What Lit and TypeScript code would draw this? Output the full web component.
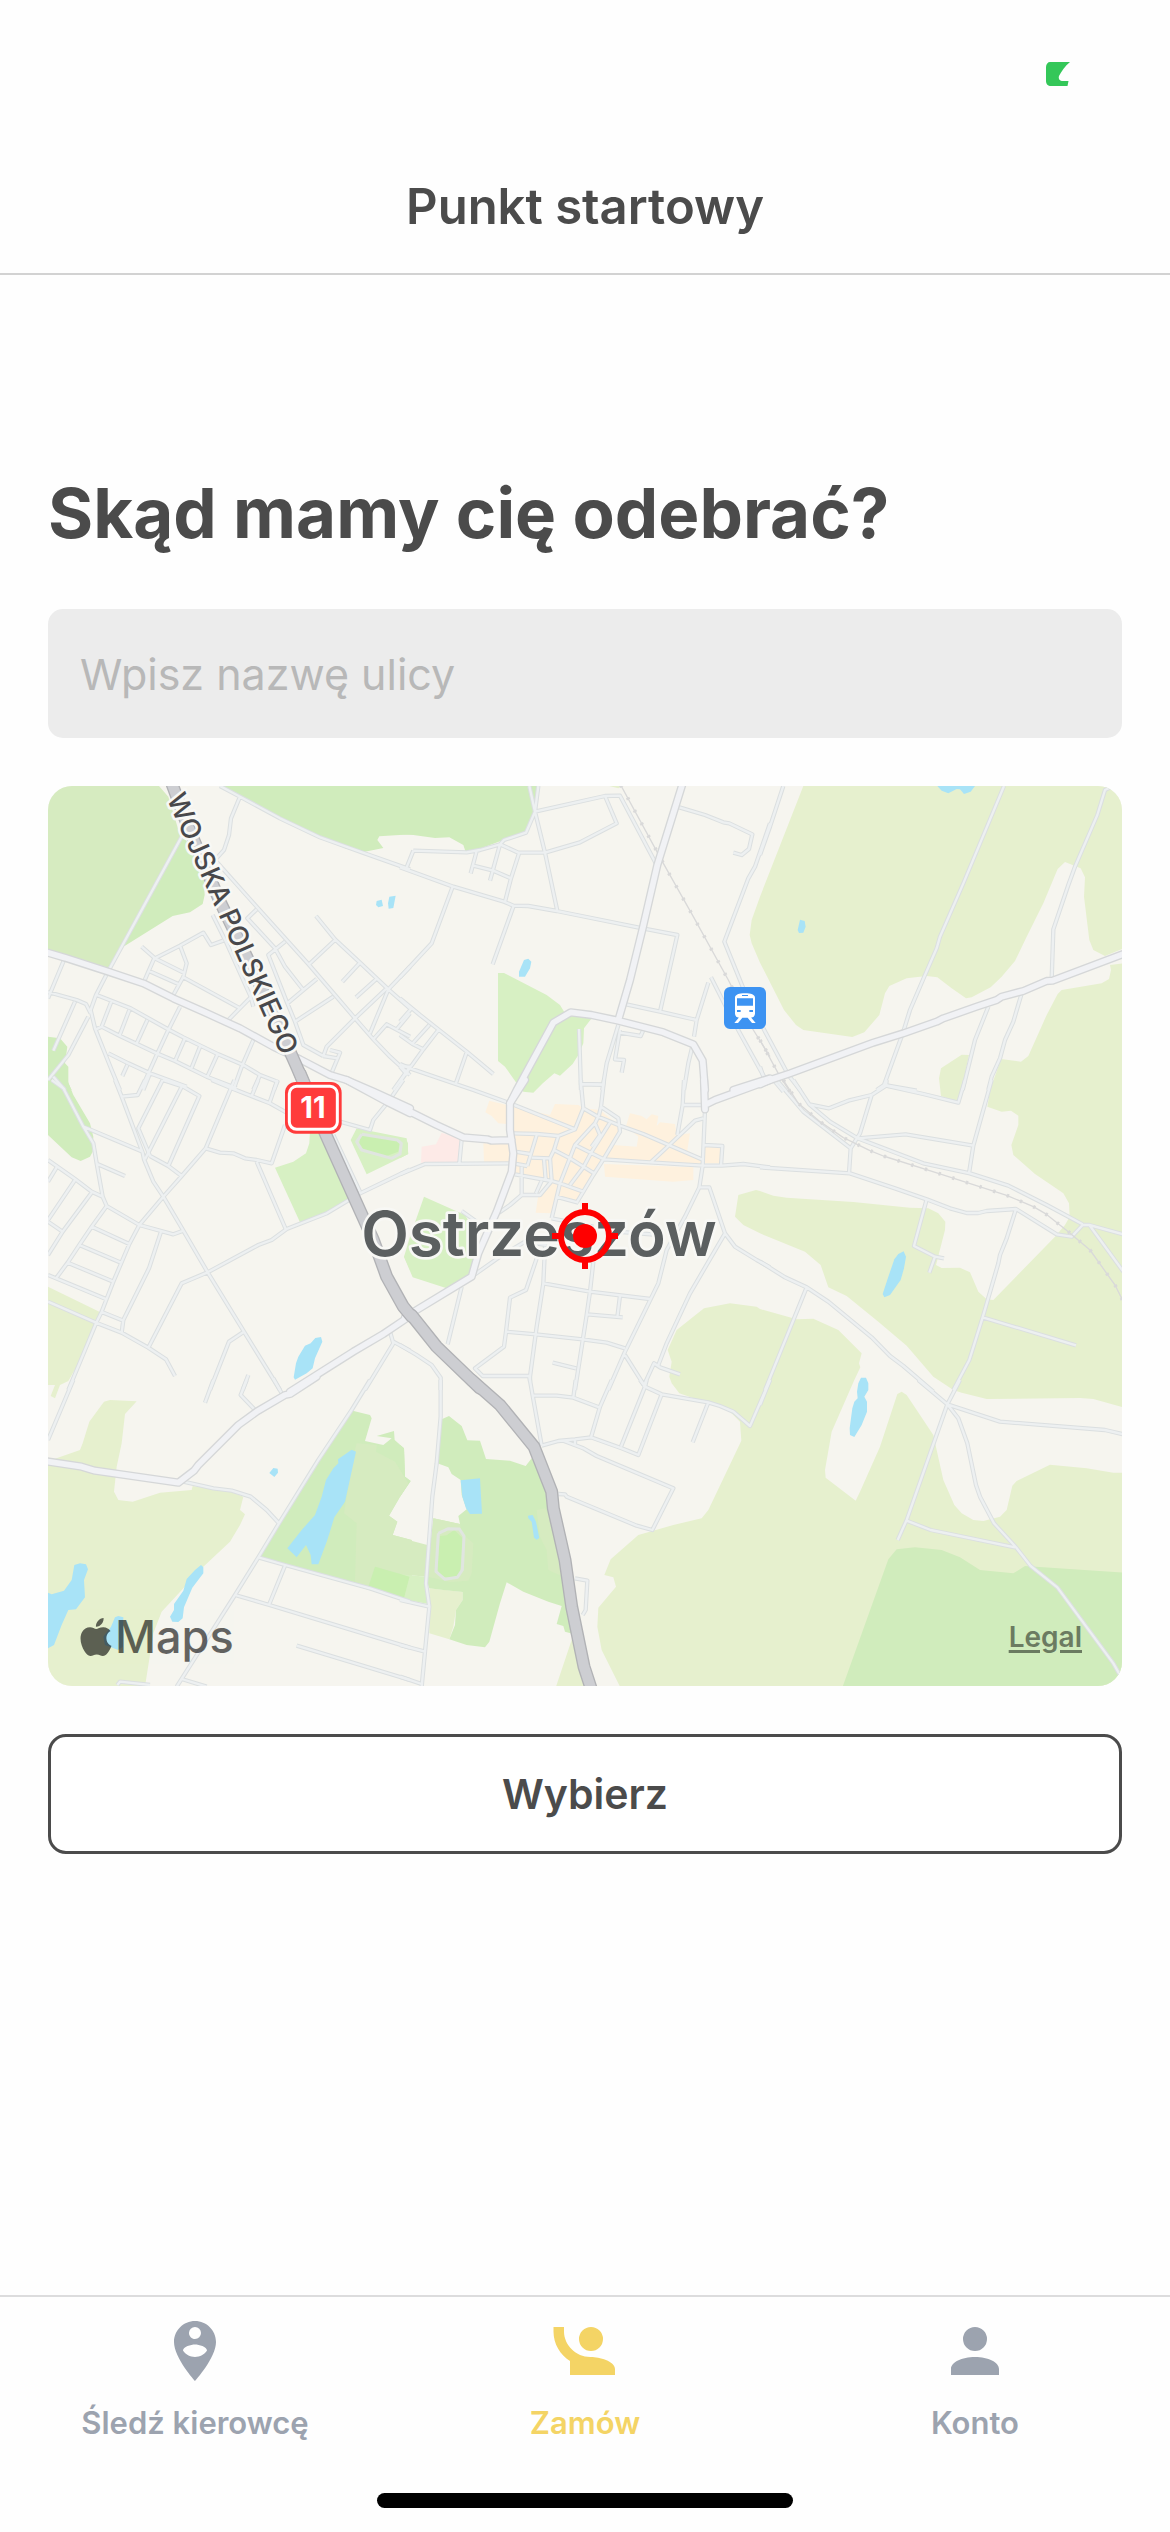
import { LitElement, html, svg, css } from "lit";
import { customElement, property, state } from "lit/decorators.js";

type Layer =
  | "meadow" | "wood" | "grove" | "park" | "pitch" | "town" | "clinic" | "water"
  | "track" | "street" | "avenue" | "highway" | "rail";

interface Sector {
  x: number;
  y: number;
  shapes: Partial<Record<Layer, string[]>>;
}

/* The map is kept as a grid of sectors; each lists its shapes as point runs in its own coordinates. */
const SECTORS: Sector[] = [
  {
    x: -24, y: -18,
    shapes: {
      grove: ["24,18 357,18 385,50 420,165 425,175 245,500 202,562 24,512"],
      wood: [
        "24,187 190,240 240,258 268,300 264,400 240,450 230,520 205,562 24,512",
        "425,170 460,200 490,270 494,345 488,372 450,397 398,408 255,497 245,500",
        "540,18 600,50 750,130 915,205 960,218 1030,204 1012,180 1018,169 1115,163 1115,18",
        "24,770 60,775 82,800 75,850 85,860 85,910 95,930 24,930",
      ],
      water: ["1010,363 1025,359 1029,378 1015,382 1008,375", "1048,350 1067,347 1060,384 1046,386 1044,370"],
      street: [
        "425,170 245,500 204,575 168,645 152,690", "152,690 165,745 215,870 240,930",
        "24,636 110,660 138,672 152,700", "72,540 24,655", "105,665 40,812", "145,710 85,825 24,900",
        "40,890 75,930", "170,645 272,685 388,750 430,772 535,823 610,855 660,885 712,905 702,930",
        "215,662 185,740 168,748", "185,740 240,768 350,820 405,843 500,890 590,925", "268,690 238,768",
        "322,720 290,790", "420,680 385,750 350,825 305,925", "435,775 405,843", "480,800 453,868",
        "533,822 502,890", "640,780 605,860 580,930", "660,885 640,930", "205,820 265,850 330,880 440,920",
        "262,855 247,888", "330,880 310,930", "305,500 345,535 435,580",
        "345,535 420,497 490,458 513,495 550,482", "345,530 325,575 310,610",
        "420,497 440,550 430,590 400,645", "325,572 415,612", "430,592 600,685", "563,722 632,652",
        "518,405 560,490 632,650 640,680",
        "600,50 573,115 567,165 552,210 525,240 583,305 650,380 740,480 805,552 885,645 945,715 1000,778 1050,830 1110,885",
        "540,18 600,50 720,115 840,172 960,215 1110,268", "650,388 622,415 705,505 735,560 790,630",
        "735,485 685,525 740,665 765,725 790,795 850,828", "740,672 790,630 830,597", "765,725 880,650",
        "828,408 885,478 960,548 1045,628 1110,685", "885,480 805,555", "960,548 907,605", "1008,598 948,652",
        "1040,625 945,715 860,800 850,828", "1045,628 990,760", "1045,628 1110,560", "1000,778 1040,733 1110,770",
        "1070,748 1110,700", "850,828 893,835 900,818 870,810", "893,835 870,890", "1085,860 1110,860 1060,930",
      ],
      avenue: ["20,517 75,533 205,575 310,610 400,655 490,695 600,745 700,800 780,838 870,885 920,900 1000,935 1110,985"],
      highway: ["388,-10 440,130 540,365 620,530 690,680 770,860 800,930"],
    },
  },
  {
    x: 1056, y: -18,
    shapes: {
      wood: ["0,18 412,18 402,90 378,158 310,180 230,210 196,213 190,195 148,172 105,174 40,165 0,163"],
      meadow: ["628,18 668,18 655,25"],
      park: ["294,579 312,579 440,645 480,675 495,700 575,715 552,745 550,790 535,825 518,852 480,887 463,880 405,930 438,900 400,938 370,935 350,910 315,860 294,843"],
      water: ["372,540 385,536 394,545 390,565 375,590 357,590 357,575"],
      street: [
        "0,262 160,320 312,365 340,377 385,378 470,393 728,445 832,465 780,695", "40,212 20,262",
        "40,212 200,217 240,210 300,193 355,218 435,218 540,187 650,130 615,48",
        "300,193 312,180 378,158 405,95 415,18", "388,18 405,95 435,218 472,393",
        "405,95 615,48 660,47 770,255", "300,193 270,302", "230,213 212,280", "220,257 280,272 333,295",
        "357,220 333,295 315,365", "158,320 95,490 0,592", "340,380 278,553",
        "0,655 60,705 115,748 200,815 280,882", "35,685 0,725", "88,735 38,790", "115,750 70,808 0,905",
        "0,765 38,792 70,808", "200,817 167,912", "0,852 30,865 167,912 220,930 330,970", "0,860 22,885",
        "838,82 915,105 970,127 988,130 1057,163 1047,207 1025,225 1000,218",
        "1110,130 1065,260 1045,295 973,485 1030,625", "665,670 780,695 890,720", "925,608 890,720 882,770",
        "933,592 975,675 1020,760 1095,895", "655,735 620,850 607,930", "660,750 645,838 672,840 665,878",
        "660,758 722,768 730,750", "537,747 543,930", "545,912 607,914", "878,795 865,850 852,930",
      ],
      avenue: [
        "848,10 772,255 728,445 690,600 655,720",
        "330,970 350,930 460,728 512,697 575,705 655,722 790,757 880,793 908,842 915,930",
        "1000,930 1110,895",
      ],
      rail: ["662,15 790,250 880,410 985,600 1060,750 1110,830"],
    },
  },
  {
    x: 2136, y: -18,
    shapes: {
      meadow: ["135,10 130,18 0,350 -25,420 -31,465 -25,490 0,548 72,690 108,735 130,750 277,771 313,757 358,705 375,640 388,618 440,595 500,588 532,592 575,625 618,655 635,652 692,622 725,590 765,543 800,470 850,370 893,267 915,246 962,265 975,292 972,350 988,480 1000,510 1035,528 1090,505 1090,10"],
      water: [
        "532,18 545,32 565,40 590,27 600,28 612,42 632,35 645,18",
        "120,419 134,423 137,440 130,458 117,459 113,450",
      ],
      street: [
        "70,18 30,140 0,225", "732,18 610,310 540,470 530,505 495,585 450,690 430,755 372,915",
        "1055,20 1035,30 1012,105 945,260 925,315 880,448 875,598",
        "785,640 760,725 735,780 720,835 695,890 685,930", "685,680 645,780 608,930", "372,915 470,932",
        "372,915 350,930", "10,745 85,885 120,930", "0,860 12,895", "45,905 70,935",
      ],
      avenue: ["0,913 30,900 90,880 340,788 430,760 530,725 550,715 650,680 710,660 725,650 790,633 860,603 878,602 1095,520"],
      rail: ["0,780 60,890 90,935"],
    },
  },
  {
    x: -24, y: 882,
    shapes: {
      wood: ["24,0 82,0 100,45 150,130 160,170 158,215 150,230 122,243 95,232 24,165"],
      meadow: ["24,620 178,695 172,735 135,815 85,903 60,915 45,955 32,948 45,915 24,915"],
      park: [
        "810,150 865,160 925,355 860,398 780,427 705,263 760,245 798,220 808,190",
        "950,145 1100,175 1105,222 980,283 932,180", "1110,505 1092,530 1110,570",
      ],
      pitch: ["962,165 1000,167 1080,185 1075,215 1040,228 975,215 958,190"],
      track: ["965,163 1072,180 1084,190 1080,222 1055,235 965,210 950,185 965,163"],
      water: ["826,774 843,771 847,785 825,835 818,865 800,880 765,899 761,892 768,850 775,830 795,797 812,790"],
      street: [
        "35,0 70,25 130,140 160,190 170,250 188,350 200,378 298,435 400,463 430,452", "130,140 308,215",
        "172,252 255,288", "24,240 105,297 155,335 188,350", "50,262 24,305", "105,300 24,420",
        "155,338 68,455 24,425", "68,455 24,525", "200,378 155,440 118,495 83,548 48,595", "155,440 268,492",
        "118,495 243,548", "83,548 220,605", "24,585 200,658",
        "370,350 298,435 268,492 220,605 185,695 168,730 135,810 85,930",
        "24,665 168,728 245,758 325,803 378,838 405,888", "183,695 250,722", "363,455 327,565 250,720 245,758",
        "225,0 245,50 308,218 312,238 340,305 370,350 430,452 503,577 612,755 720,930", "245,50 293,45 315,0",
        "368,0 295,145 330,228", "368,0 430,20 478,48 385,258", "425,20 315,238", "330,228 385,258 425,288",
        "583,0 497,205 425,288 370,350", "497,205 540,218 580,220 615,235 650,240 695,250 735,135",
        "650,245 737,447", "515,0 575,25 690,70 740,98", "655,0 635,48", "712,0 688,70",
        "503,577 655,495 695,480 740,447 860,400 960,340 1110,268", "503,577 425,610 325,803",
        "612,755 567,785 510,930", "625,885 608,930", "880,165 960,335", "900,125 990,150 1000,120 1045,65 1090,0",
        "1050,755 1060,790 975,930", "1060,785 1110,812",
      ],
      avenue: ["920,0 1040,65 1110,100", "750,935 940,815 1030,762 1095,718"],
      highway: ["780,-20 857,163 960,392 1000,480 1040,590 1090,680 1115,710"],
    },
  },
  {
    x: 1056, y: 882,
    shapes: {
      park: ["72,350 195,405 235,470 215,590 140,625 38,592 12,530 30,470", "0,175 18,178 24,190 24,222 0,235"],
      town: [
        "268,62 320,75 320,132 295,130 275,108 256,97",
        "338,80 450,105 465,72 535,75 550,85 600,90 655,135 660,160 620,230 575,290 530,370 468,350 455,400 407,398 415,345 450,305 345,283 340,160",
        "678,138 690,100 725,108 740,118 755,103 775,108 770,138 780,127 825,132 830,165 870,160 862,210 905,240 905,252 750,247 615,235 640,195 710,200 715,170",
        "612,252 880,262 880,300 820,305 615,290", "915,195 962,200 960,250 915,250", "250,190 335,192 335,248 252,246",
      ],
      clinic: ["125,158 185,178 178,247 63,248 65,200 108,193"],
      street: [
        "330,70 525,148 550,85 543,12 543,0", "543,12 607,14", "612,0 603,80 597,105 585,130 525,195 480,310 455,415",
        "550,85 590,108 655,135 730,162 910,240", "603,80 655,115 660,155 612,235 580,285 550,335 530,368",
        "630,128 575,215 550,262 510,315", "585,130 600,165 575,200", "340,160 410,162 475,168 525,148",
        "475,168 462,210 510,235 582,280", "525,195 612,238", "462,210 450,235 395,233", "410,165 382,258",
        "345,215 390,222", "455,303 450,235", "432,237 437,298", "345,283 455,303 480,310 550,335",
        "340,250 382,258", "365,260 365,345 420,345 455,303", "425,302 408,340", "365,345 330,375 297,398",
        "468,350 535,368", "0,283 75,252 345,250", "185,178 178,250",
        "612,238 750,247 910,257 965,257 1030,252 1110,262", "752,247 805,198 885,122 910,115",
        "852,0 848,75 832,165", "848,75 905,75",
        "915,90 908,257 898,322 855,410 800,510 775,610 675,815 625,930",
        "898,322 928,322 975,460 1005,500 1070,540 1110,562", "912,195 967,198 963,257",
        "975,460 870,640 800,790 775,855", "840,883 780,862 762,850 730,920", "675,825 735,920",
        "455,415 580,440", "650,455 780,465", "580,545 570,635 560,705 525,930",
        "435,500 430,610 410,740 390,890 390,905", "430,610 570,635 750,657", "660,647 652,712", "562,703 668,712",
        "410,535 378,630 330,653 318,755 312,800 225,865 248,888 390,888",
        "318,755 408,763 548,778 620,788 675,805", "458,848 528,865", "222,585 300,530 375,485 440,495",
        "185,393 230,425", "185,620 143,793", "0,795 50,825 95,855 122,893 122,930",
      ],
      avenue: [
        "0,80 110,135 190,172 262,178 275,182 335,180",
        "375,0 330,70 330,150 340,220 335,275 290,395 235,520 215,590 50,690 15,712",
        "912,0 915,88", "915,75 945,60 1110,0",
      ],
      highway: ["35,706 110,800 240,925"],
    },
  },
  {
    x: 2136, y: 882,
    shapes: {
      meadow: [
        "1090,-350 1050,-345 1053,-330 1047,-303 1025,-290 905,-270 893,-258 860,-195 805,-72 783,-55 723,-63 690,30 682,80 725,95 753,92 775,107 775,135 754,195 760,225 825,282 910,340 927,370 929,410 915,435 885,470 700,660 680,658 655,635 630,577 600,563 545,564 528,555 555,450 556,425 535,400 505,385 450,383 280,366 80,353 40,347 0,333 -12,330 -65,345 -75,410 -50,435 0,460 135,515 182,555 205,622 260,648 355,725 440,797 520,890 580,930 605,938 680,957 960,954 1000,957 1090,982",
        "627,-75 605,-76 543,-35 537,-5 543,48 597,68",
      ],
      water: ["431,514 438,530 432,565 422,600 390,645 373,652 368,642 385,590 403,538 415,522"],
      street: [
        "0,262 270,280 405,325 500,358 570,385 620,399 655,399 680,393 768,387 890,463 935,470 968,435 988,435 1090,463",
        "988,435 1090,575", "100,0 148,73 210,125 293,175 490,250 630,280 745,317 860,375 968,433",
        "50,0 130,95 272,205 267,280", "148,73 207,85 265,62 335,45 378,17 380,0", "378,17 490,42 595,68 615,0",
        "335,45 300,160 272,205", "293,175 437,163 640,197", "695,0 640,197 627,280",
        "500,358 462,498 525,530 552,535", "525,530 508,578",
        "768,387 740,475 720,525 715,550 668,712 628,840 580,930", "668,712 948,796",
        "0,545 75,592 140,622 205,665 335,772 390,828 430,858 520,935", "140,622 15,930",
      ],
      rail: ["70,0 115,70 180,125 250,173 330,212 370,228 535,280 740,346 820,380 855,400 925,455 990,510 1040,580 1065,615 1090,665"],
    },
  },
  {
    x: -24, y: 1782,
    shapes: {
      meadow: ["45,236 120,210 128,190 148,125 192,65 210,60 290,64 255,102 245,190 230,260 222,335 235,360 278,365 360,338 455,330 458,318 575,335 610,350 600,390 615,403 600,435 570,485 490,560 365,695 340,760 315,920 24,920 24,255"],
      wood: ["938,92 990,105 995,115 975,183 1030,195 1055,175 1010,168 1062,153 1064,180 1092,205 1095,290 1112,303 1080,350 1047,407 1072,425 1058,465 1115,480 1115,668 655,530 835,240"],
      grove: ["950,190 1010,195 1008,215 1065,245 1105,310 1080,350 1047,407 1072,425 1058,465 1115,480 1115,590 1005,560 985,620 945,605 950,430 912,400 935,250"],
      pitch: ["1005,560 1108,590 1088,652 985,622"],
      water: [
        "935,209 948,215 915,365 883,412 862,480 835,553 815,553 812,525 798,495 770,532 742,505 785,450 825,405 845,350 858,300 880,265 895,250 894,238",
        "700,264 713,266 714,278 703,291 688,279",
        "103,555 120,550 138,553 144,568 132,600 135,652 108,688 85,690 65,735 42,795 24,805 24,638 35,643 72,632 95,600",
        "483,555 490,562 490,580 457,623 432,682 428,715 415,726 397,725 390,710 402,690 402,672 430,632 440,597 465,570",
        "235,708 250,712 248,800 235,810 195,795 190,770 213,740 225,712",
      ],
      street: [
        "100,0 24,180", "520,0 495,68", "620,0 602,45 650,95", "700,-5 728,45",
        "430,305 520,325 575,332 632,350 680,390 717,430", "990,0 935,90 835,240 717,430 655,532 585,645 410,920",
        "655,532 735,555 990,625 1110,665", "735,557 688,672", "585,645 688,675 1110,803", "770,797 1110,900",
        "425,897 500,920", "232,915 240,905 330,915",
      ],
      avenue: ["20,244 125,260 165,272 415,308 462,272 475,255 595,135 650,95 735,45 750,42 830,-10"],
    },
  },
  {
    x: 1056, y: 1782,
    shapes: {
      wood: [
        "125,118 147,108 185,138 202,181 240,182 258,237 330,242 377,258 395,235 455,330 500,560 520,762 495,755 490,738 470,732 485,678 445,665 370,635 320,607 300,670 268,785 255,802 200,795 148,778 165,735 168,690 188,660 188,636 130,630 88,625 78,600 90,500 100,415 180,432 175,408 200,388 185,345 182,300 155,282 145,262 112,250",
        "0,195 12,205 15,290 32,303 0,350",
      ],
      grove: [
        "435,385 410,390 420,470 440,510 445,570 490,590 470,450", "0,473 82,495 78,590 0,583",
        "100,415 180,432 185,460 220,490 215,580 205,602 150,606 85,590",
      ],
      park: ["0,583 78,590 85,672 0,656"],
      meadow: ["88,625 188,636 188,660 168,690 160,740 148,778 88,760", "520,765 468,920 575,920 545,800"],
      pitch: ["120,468 140,466 163,450 188,475 182,560 175,595 125,590 112,570", "0,583 28,592 12,655 0,650"],
      track: ["115,460 145,446 178,447 192,468 187,570 172,592 135,598 108,575 115,460"],
      water: ["182,301 240,295 246,401 210,402 198,385 187,350", "384,407 398,405 408,425 418,474 410,479 402,473 395,425 385,415"],
      street: [
        "1110,0 1050,138 1000,95 960,78 925,67 785,43 735,20 720,0", "925,67 878,187",
        "785,43 715,225 665,205 573,172 525,178 475,183 425,197", "735,20 663,200", "740,0 735,20",
        "635,0 600,80 573,172", "398,47 470,47 520,53 600,83", "520,53 527,0", "388,-10 398,47 425,197",
        "490,182 550,205 590,228 820,325 757,450 710,437 500,350 495,343 475,342", "525,178 525,192",
        "122,0 122,110 110,250 97,350 78,610 88,680 75,815 65,920", "0,660 45,670 88,680", "0,795 75,815",
        "0,890 65,912", "525,595 562,602 557,690 548,705",
      ],
      highway: ["215,0 300,75 402,200 455,335 460,385 495,540 515,680 552,860 578,940"],
    },
  },
  {
    x: 2136, y: 1782,
    shapes: {
      meadow: ["-250,-150 -168,-215 -90,-230 -10,-220 0,-213 110,-182 160,-184 235,-150 305,-80 297,-50 301,-38 283,0 215,155 195,270 197,293 287,362 300,335 360,200 412,42 425,35 440,45 520,165 550,300 583,375 605,400 640,420 670,423 720,410 740,390 757,317 770,303 870,254 980,265 1060,278 1090,278 1090,920 -420,920 -475,810 -488,740 -485,683 -432,620 -440,592 -467,585 -448,538 -365,465 -260,435 -175,415 -155,390 -56,182 -60,125 -95,90 -160,68 -242,40 -265,10 -272,-10 -265,-55 -277,-90"],
      wood: ["248,920 385,538 410,508 465,502 545,510 600,532 660,570 760,580 795,558 850,562 1090,578 1090,920"],
      water: ["303,-7 318,-7 325,10 325,30 313,50 321,65 321,95 305,135 283,171 270,165 269,145 277,85 283,65 293,55 291,35 295,10"],
      street: [
        "475,0 562,73 440,420 413,480",
        "600,0 562,73 595,115 622,190 648,315 660,350 702,430 768,502 812,558 892,622 1060,850 1080,885",
        "562,73 720,125 1035,150 1090,163", "440,422 512,450 765,502", "30,0 0,75",
      ],
    },
  },
];

const AREAS: Layer[] = ["meadow", "wood", "grove", "park", "pitch", "town", "clinic", "water"];

function layer(kind: Layer, className: string, closed = false) {
  return svg`<g class=${className}>${SECTORS.filter((s) => s.shapes[kind]).map(
    (s) => svg`<path transform=${`translate(${s.x} ${s.y})`}
      d=${s.shapes[kind]!.map((run) => `M${run}${closed ? "z" : ""}`).join("")}></path>`
  )}</g>`;
}

@customElement("town-map")
class TownMap extends LitElement {
  static styles = css`
    :host {
      display: block;
      position: relative;
      overflow: hidden;
      border-radius: 24px;
      aspect-ratio: 179 / 150;
      background: #f6f5ef;
    }
    .canvas { display: block; width: 100%; height: 100%; }
    .meadow { fill: #e6f0ce; }
    .wood { fill: #d0ecbc; }
    .grove { fill: #d6ebc0; }
    .park { fill: #d7f0c3; }
    .pitch { fill: #c9efb0; }
    .town { fill: #fef1de; }
    .clinic { fill: #fdeae7; }
    .water { fill: #a8e3f7; }
    .line { fill: none; stroke-linejoin: round; }
    .track { stroke: #e0e5e0; stroke-width: 9; }
    .street-edge { stroke: #dbdfe0; stroke-width: 13; }
    .street { stroke: #edf0f1; stroke-width: 7; }
    .avenue-edge { stroke: #d5d7d8; stroke-width: 25; stroke-linecap: round; }
    .avenue { stroke: #f1f2f5; stroke-width: 17; stroke-linecap: round; }
    .highway-edge { stroke: #b1b2b5; stroke-width: 39; stroke-linecap: round; }
    .highway { stroke: #cdced2; stroke-width: 31; stroke-linecap: round; }
    .rail { stroke: #d9d9d9; stroke-width: 4; }
    .rail-ties { stroke: #d9d9d9; stroke-width: 11; stroke-dasharray: 7 36; }
    .label {
      font-family: Inter, "Liberation Sans", sans-serif;
      text-anchor: middle;
      paint-order: stroke;
      stroke: #f8f8f5;
      stroke-linejoin: round;
    }
    .road-name { font-size: 82px; font-weight: 500; fill: #48484b; stroke-width: 16; }
    .city { font-size: 186px; font-weight: 600; fill: #5b5f60; stroke-width: 16; }
    .shield { font-size: 88px; font-weight: 700; fill: #fff; stroke: none; }
    .footer {
      position: absolute;
      inset: auto 40px 24px 32px;
      display: flex;
      justify-content: space-between;
      align-items: center;
      font-family: Inter, "Liberation Sans", sans-serif;
    }
    .brand {
      display: flex;
      align-items: center;
      gap: 3px;
      font-size: 45px;
      line-height: 50px;
      font-weight: 500;
      color: #000;
      opacity: 0.6;
    }
    .apple { width: 32px; height: 38px; fill: currentColor; }
    .legal {
      font-size: 28px;
      line-height: 32px;
      font-weight: 600;
      color: #6b7b61;
      text-decoration-thickness: 3px;
      text-underline-offset: 3px;
    }
    .target {
      position: absolute;
      inset: 0;
      margin: auto;
      width: 72px;
      height: 72px;
      fill: #f00;
    }
    .ring { fill: none; stroke: #f00; stroke-width: 2; }
  `;

  render() {
    return html`
      <svg class="canvas" viewBox="0 0 3222 2700" preserveAspectRatio="xMidYMid slice" role="img" aria-label="Ostrzeszów">
        ${AREAS.map((kind) => layer(kind, kind, true))}
        ${layer("track", "line track")}
        ${layer("street", "line street-edge")}
        ${layer("street", "line street")}
        ${layer("rail", "line rail")}
        ${layer("rail", "line rail-ties")}
        ${layer("avenue", "line avenue-edge")}
        ${layer("avenue", "line avenue")}
        ${layer("highway", "line highway-edge")}
        ${layer("highway", "line highway")}
        <text class="label road-name" transform="translate(528 424) rotate(66)">WOJSKA POLSKIEGO</text>
        <g transform="translate(711 888)">
          <rect width="170" height="155" rx="32" fill="#ff3b3b"></rect>
          <rect x="13" y="13" width="144" height="129" rx="22" fill="none" stroke="#fff" stroke-width="9"></rect>
          <text class="label shield" x="84" y="108">11</text>
        </g>
        <g transform="translate(2028 603)">
          <rect width="126" height="126" rx="18" fill="#3d93f2"></rect>
          <path fill="#fff" d="M33 32c0-9 12-13 30-13s30 4 30 13v48c0 7-6 12-13 12H46c-7 0-13-5-13-12zM46 90h11l-15 18H31zM69 90h11l15 18H84z"></path>
          <path fill="#3d93f2" d="M54 24h18v3H54zM39 34h48v22H39zM39 69h11v6H39zM76 69h11v6H76z"></path>
        </g>
        <text class="label city" x="1473" y="1410">Ostrzeszów</text>
      </svg>
      <div class="footer">
        <span class="brand">
          <svg class="apple" viewBox="2 0 20 24" aria-hidden="true">
            <path d="M12.152 6.896c-.948 0-2.415-1.078-3.96-1.04-2.04.027-3.91 1.183-4.961 3.014-2.117 3.675-.546 9.103 1.519 12.09 1.013 1.454 2.208 3.09 3.792 3.039 1.52-.065 2.09-.987 3.935-.987 1.831 0 2.35.987 3.96.948 1.637-.026 2.676-1.48 3.676-2.948 1.156-1.688 1.636-3.325 1.662-3.415-.039-.013-3.182-1.221-3.22-4.857-.026-3.04 2.48-4.494 2.597-4.559-1.429-2.09-3.623-2.324-4.39-2.376-2-.156-3.675 1.09-4.61 1.09zM15.53 3.83c.843-1.012 1.4-2.427 1.245-3.83-1.207.052-2.662.805-3.532 1.818-.78.896-1.454 2.338-1.273 3.714 1.338.104 2.715-.688 3.559-1.701"></path>
          </svg>
          <span>Maps</span>
        </span>
        <a class="legal" href="#legal">Legal</a>
      </div>
      <svg class="target" viewBox="0 0 24 24" aria-hidden="true">
        <circle cx="12" cy="12" r="4"></circle>
        <circle class="ring" cx="12" cy="12" r="8"></circle>
        <path d="M11 1h2v3h-2zM11 20h2v3h-2zM1 11h3v2H1zM20 11h3v2h-3z"></path>
      </svg>
    `;
  }
}

const TABS = [
  {
    id: "track",
    label: "Śledź kierowcę",
    icon: "M12,2C15.86,2 19,5.14 19,9C19,14.25 12,22 12,22C12,22 5,14.25 5,9C5,5.14 8.14,2 12,2M12,4A2,2 0 0,0 10,6C10,7.11 10.9,8 12,8A2,2 0 0,0 14,6A2,2 0 0,0 12,4M12,14C13.67,14 15.14,13.15 16,11.85C16,10.53 13.33,9.8 12,9.8C10.67,9.8 8,10.53 8,11.85C8.86,13.15 10.33,14 12,14Z",
  },
  {
    id: "order",
    label: "Zamów",
    icon: "M1.5,4V5.5C1.5,9.65 3.71,13.28 7,15.3V20H22V18C22,15.34 16.67,14 14,14C14,14 13.83,14 13.75,14C9,14 5,10 5,5.5V4M14,4A4,4 0 0,0 10,8A4,4 0 0,0 14,12A4,4 0 0,0 18,8A4,4 0 0,0 14,4Z",
  },
  {
    id: "account",
    label: "Konto",
    icon: "M12,4A4,4 0 0,1 16,8A4,4 0 0,1 12,12A4,4 0 0,1 8,8A4,4 0 0,1 12,4M12,14C16.42,14 20,15.79 20,18V20H4V18C4,15.79 7.58,14 12,14Z",
  },
];

@customElement("tab-bar")
class TabBar extends LitElement {
  @property() active = "order";

  static styles = css`
    :host { display: block; border-top: 2px solid #dcdcdd; }
    .tabs { display: grid; grid-template-columns: repeat(3, 1fr); padding-top: 18px; }
    .tab {
      display: flex;
      flex-direction: column;
      align-items: center;
      gap: 16px;
      padding: 0;
      border: 0;
      background: none;
      color: #9ca3af;
      font-family: Inter, "Liberation Sans", sans-serif;
      font-size: 31px;
      line-height: 40px;
      font-weight: 600;
      cursor: pointer;
    }
    .current { color: #f4d465; }
    .icon { width: 72px; height: 72px; fill: currentColor; fill-rule: evenodd; }
    .home { display: flex; justify-content: center; padding: 50px 0 24px; }
    .home-bar { width: 36%; max-width: 416px; height: 15px; border-radius: 8px; background: #000; }
  `;

  render() {
    return html`
      <nav class="tabs">
        ${TABS.map(
          (tab) => html`<button
            class=${tab.id === this.active ? "tab current" : "tab"}
            @click=${() => (this.active = tab.id)}
          >
            <svg class="icon" viewBox="0 0 24 24" aria-hidden="true"><path d=${tab.icon}></path></svg>
            <span>${tab.label}</span>
          </button>`
        )}
      </nav>
      <div class="home"><div class="home-bar"></div></div>
    `;
  }
}

@customElement("app-root")
class AppRoot extends LitElement {
  @state() private street = "";

  static styles = css`
    :host {
      display: flex;
      flex-direction: column;
      min-height: 100vh;
      background: #fefefe;
      color: #4b4b4b;
      font-family: Inter, "Liberation Sans", sans-serif;
    }
    .status { display: flex; justify-content: flex-end; padding: 62px 100px 55px; }
    .camera { display: block; width: 24px; height: 24px; fill: #34c759; }
    .header {
      display: flex;
      justify-content: center;
      align-items: center;
      height: 132px;
      border-bottom: 2px solid #d2d2d2;
    }
    .title { margin: 0; font-size: 49px; line-height: 60px; font-weight: 600; }
    .content {
      flex: 1;
      display: flex;
      flex-direction: column;
      gap: 48px;
      padding: 190px 48px 48px;
    }
    .question { margin: 0; font-size: 69px; line-height: 96px; font-weight: 700; }
    .field {
      box-sizing: border-box;
      width: 100%;
      height: 129px;
      padding: 0 32px;
      border: 0;
      border-radius: 15px;
      background: #ececec;
      color: inherit;
      font: inherit;
      font-size: 43px;
    }
    .field::placeholder { color: #b8b8b8; opacity: 1; }
    .choose {
      height: 120px;
      border: 3px solid #4b4b4b;
      border-radius: 18px;
      background: #fff;
      color: inherit;
      font: inherit;
      font-size: 41px;
      font-weight: 600;
      cursor: pointer;
    }
  `;

  render() {
    return html`
      <div class="status">
        <svg class="camera" viewBox="0 0 24 24" aria-hidden="true">
          <path d="M4 0H24C19 4 15 10 13 14c-1 3 1 5 4 5h5.500l-1 5H5C2 24 0 22 0 19V5C0 2 2 0 4 0z"></path>
        </svg>
      </div>
      <header class="header"><h1 class="title">Punkt startowy</h1></header>
      <main class="content">
        <h2 class="question"><label for="street">Skąd mamy cię odebrać?</label></h2>
        <input
          id="street"
          class="field"
          type="text"
          placeholder="Wpisz nazwę ulicy"
          .value=${this.street}
          @input=${(e: Event) => (this.street = (e.target as HTMLInputElement).value)}
        />
        <town-map></town-map>
        <button class="choose" type="button">Wybierz</button>
      </main>
      <tab-bar></tab-bar>
    `;
  }
}
